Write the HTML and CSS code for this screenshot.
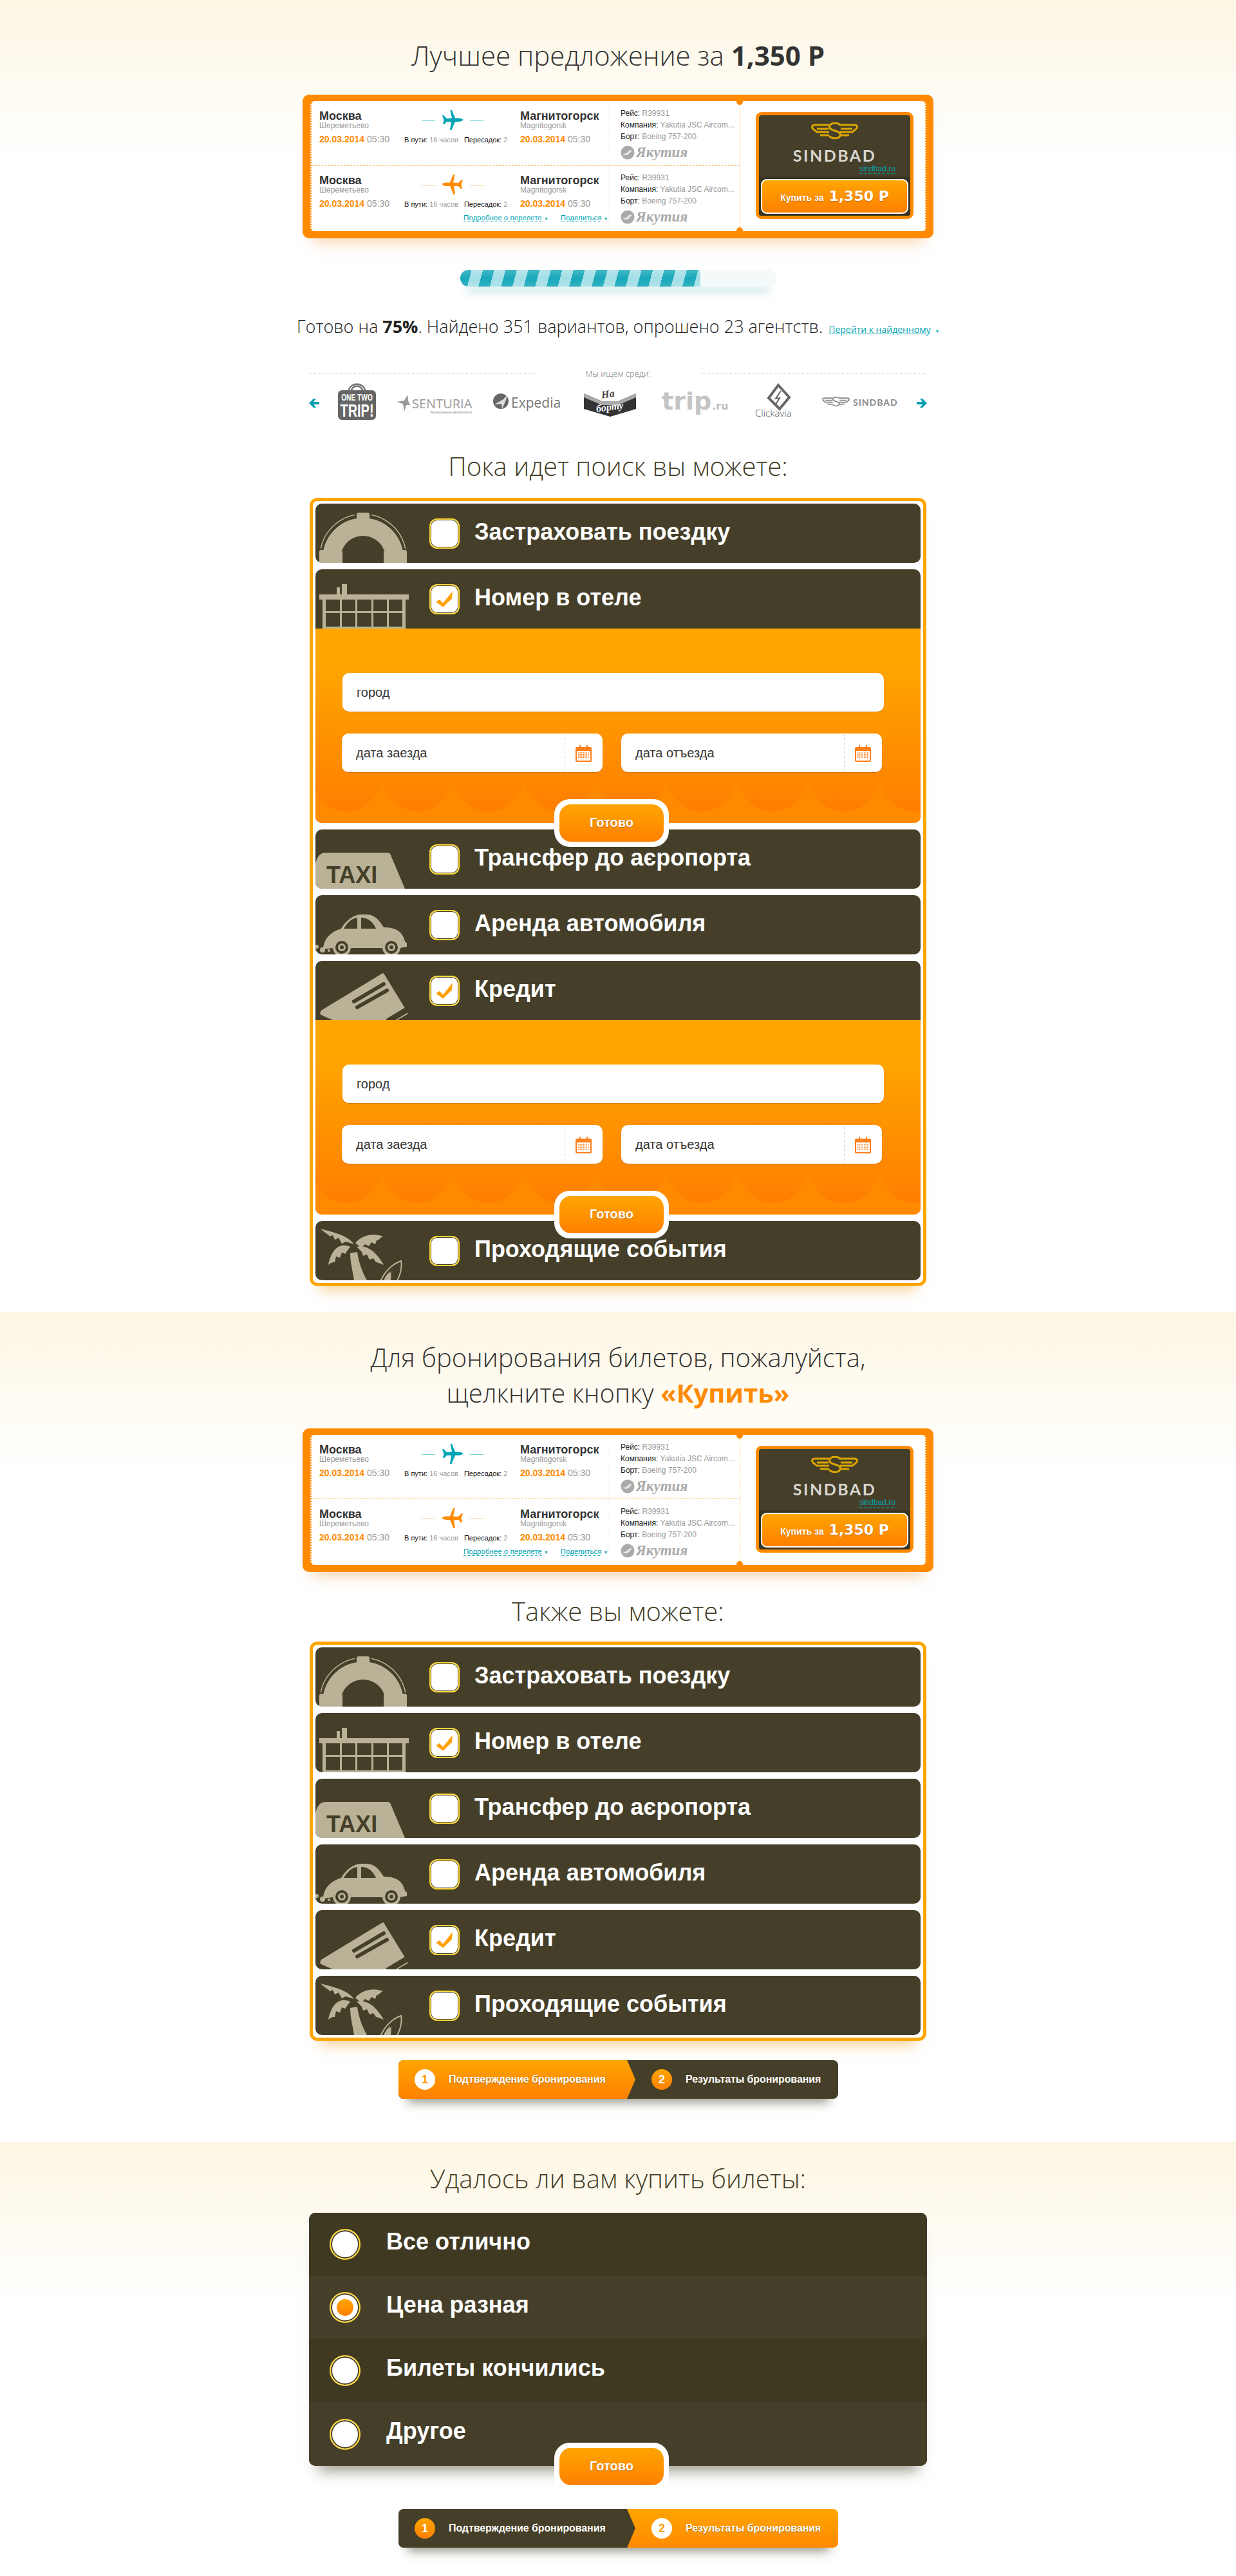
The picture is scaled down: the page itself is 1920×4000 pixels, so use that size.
FILE: index.html
```html
<!DOCTYPE html>
<html lang="ru">
<head>
    <meta charset="UTF-8">
    <title>Поиск билетов</title>
    <link rel="stylesheet" href="styles.css">
</head>
<body>
    <!-- общие иконки -->
    <svg class="sprite" xmlns="http://www.w3.org/2000/svg">
        <symbol id="plane" viewBox="0 0 32 32">
            <path d="M32 15c0-1.600-4-2.500-8-2.500h-4L15 0h-2.500L15 12.500l-8 .5-5-5H0l2.500 7.500L1 22h2l4-4h7l-2 13h2.500L20 18h4c4 0 8-1.400 8-3z"/>
        </symbol>
        <symbol id="wings" viewBox="0 0 73 28">
            <g fill="none" stroke="currentColor" stroke-width="3">
                <path d="M28 5H6C1 5 0 9 4 12l5 4h19M9 11h18M14 21h14"/>
                <path d="M45 5h22c5 0 6 4 2 7l-5 4H45M64 11H46M59 21H45"/>
                <path d="M46 6c-4-5-15-5-17 0-2 5 4 7 8 8s10 3 8 8c-2 5-13 5-17 0"/>
            </g>
        </symbol>
        <symbol id="yakutia" viewBox="0 0 22 22">
            <circle cx="11" cy="11" r="10.500" fill="#aaa"/>
            <path d="M3 13c4 0 6-1 9-4 2-2 4-2 6-1-2 1-3 3-5 5-2 2-5 3-10 0z" fill="#e8e8e8"/>
        </symbol>
        <symbol id="calendar" viewBox="0 0 25 26">
            <path d="M2 3h4V0h2v3h9V0h2v3h4a2 2 0 0 1 2 2v19a2 2 0 0 1-2 2H2a2 2 0 0 1-2-2V5a2 2 0 0 1 2-2z" fill="#ff7f1a"/>
            <rect x="2" y="9" width="21" height="15" fill="#fff"/>
            <path d="M4 12h17M4 14.500h17M4 17h17M4 19.500h17" stroke="#ff7f1a" stroke-width="1.500" stroke-dasharray="1.500 1"/>
        </symbol>
        <symbol id="check" viewBox="0 0 47 47">
            <path d="M9 28l6-4 6 6 16-20-1 12-15 15z" fill="#ffa000"/>
        </symbol>
        <symbol id="arrow" viewBox="0 0 16 14">
            <path d="M7 0L0 7l7 7h4L7 9h9V5H7l4-5z" fill="#00a0b0"/>
        </symbol>
        <symbol id="scallop" viewBox="0 0 110.400 70" preserveAspectRatio="none">
            <path d="M0 0c6 30 26 52 55.200 52S104.400 30 110.400 0V70H0z" fill="#ff8a00"/>
        </symbol>

        <symbol id="ico-insurance" viewBox="0 0 150 92">
            <g fill="#b9b296">
                <path d="M12.400 72a63 63 0 0 1 123.200 0H106.500a35 35 0 0 0-65 0z"/>
                <rect x="6" y="72" width="36" height="22" rx="3"/>
                <rect x="106" y="72" width="36" height="22" rx="3"/>
            </g>
            <path d="M8.300 70a67 67 0 0 1 131.400 0" fill="none" stroke="#b9b296" stroke-width="1.500"/>
            <rect x="61" y="10" width="26" height="12" fill="#453f29"/>
            <rect x="64" y="14" width="20" height="36" rx="3" fill="#b9b296"/>
        </symbol>
        <symbol id="ico-hotel" viewBox="0 0 150 92">
            <g fill="#b9b296">
                <rect x="33" y="28" width="5" height="12"/>
                <rect x="41" y="23" width="8" height="17"/>
                <rect x="6" y="39" width="139" height="8"/>
                <rect x="11" y="47" width="5" height="45"/>
                <rect x="135" y="47" width="5" height="45"/>
                <rect x="38" y="47" width="3" height="45"/>
                <rect x="62" y="47" width="3" height="45"/>
                <rect x="87" y="47" width="3" height="45"/>
                <rect x="111" y="47" width="3" height="45"/>
                <rect x="11" y="65" width="129" height="3"/>
                <rect x="11" y="89" width="129" height="3"/>
            </g>
        </symbol>
        <symbol id="ico-taxi" viewBox="0 0 150 92">
            <path d="M0 54C2 44 6 36 16 36H112C115 36 116 37 117 40L139 92H0z" fill="#b9b296"/>
        </symbol>
        <symbol id="ico-car" viewBox="0 0 150 92">
            <path d="M12 84C12 72 20 58 40 52 48 38 60 30 72 30H80C92 30 100 40 106 50 122 50 132 54 137 66 139 72 140 74 142 74V80L132 82A14 14 0 0 0 104 82H55A14 14 0 0 0 27 82z" fill="#b9b296"/>
            <path d="M44 52C50 42 56 36 65 35V52zM71 35C82 35 90 42 94 52H71z" fill="#453f29"/>
            <circle cx="41" cy="81" r="14" fill="#b9b296"/>
            <circle cx="41" cy="81" r="10" fill="#453f29"/>
            <circle cx="41" cy="81" r="6" fill="#b9b296"/>
            <circle cx="41" cy="81" r="3" fill="#453f29"/>
            <circle cx="118" cy="81" r="14" fill="#b9b296"/>
            <circle cx="118" cy="81" r="10" fill="#453f29"/>
            <circle cx="118" cy="81" r="6" fill="#b9b296"/>
            <circle cx="118" cy="81" r="3" fill="#453f29"/>
            <circle cx="2" cy="80" r="3" fill="#b9b296"/>
            <circle cx="11" cy="85" r="4" fill="#b9b296"/>
            <circle cx="21" cy="86" r="2" fill="#b9b296"/>
        </symbol>
        <symbol id="ico-credit" viewBox="0 0 150 92">
            <path d="M103 20c2-1 3-1 4 1l36 59c1 2 0 3-2 4l-14 8H27L9 84c-2-1-2-3-1-5 0-1 0-1 1-2z" fill="#b9b296"/>
            <path d="M60 63l46-27M65 72l46-26" stroke="#453f29" stroke-width="6" stroke-linecap="round"/>
            <path d="M142 76L112 94" stroke="#453f29" stroke-width="9"/>
        </symbol>
        <symbol id="ico-palm" viewBox="0 0 150 92">
            <g fill="#b9b296">
                <path d="M54 50l11-2c2 16 8 32 15 44H60c-2-14-6-28-6-42z"/>
                <path d="M60 36C50 22 30 18 8 12c8 8 12 8 14 12l5-2 3 7 6-3 5 9 6-3z"/>
                <path d="M62 34C72 22 90 18 105 24c-5 2-6 6-10 6l-2 6-6-3-4 6-6-3-6 6z"/>
                <path d="M54 40C42 34 26 38 20 68c5-4 7-4 10-4l2-9 6 2 3-8 5 2z"/>
                <path d="M64 40c14-4 30 6 42 28-6-2-10-4-12-4l-4-6-6 2-4-8-6 2-2-6z"/>
            </g>
            <path d="M100 96C108 76 122 66 133 62c2 12-2 24-8 34z" fill="none" stroke="#b9b296" stroke-width="2"/>
            <path d="M106 92c4-8 6-10 10-14-1 5-1 6 2-1-1 5 0 8-1 15z" fill="#b9b296"/>
        </symbol>
    </svg>

    <section class="screen">
        <h1 class="screen-title first-title">Лучшее предложение за <b>1,350 Р</b></h1>

        <div class="ticket">
            <div class="ticket-rows">
                <div class="flight">
                    <div class="city">
                        <div class="city-name">Москва</div>
                        <div class="city-port">Шереметьево</div>
                        <div class="city-date"><b>20.03.2014</b> 05:30</div>
                    </div>
                    <div class="route">
                        <div class="route-line teal"><i></i><svg class="plane"><use href="#plane"/></svg><i></i></div>
                        <div class="route-meta"><span>В пути: <em>16 часов</em></span><span>Пересадок: <em>2</em></span></div>
                    </div>
                    <div class="city">
                        <div class="city-name">Магнитогорск</div>
                        <div class="city-port">Magnitogorsk</div>
                        <div class="city-date"><b>20.03.2014</b> 05:30</div>
                    </div>
                    <div class="info">
                        <div>Рейс: <em>R39931</em></div>
                        <div>Компания: <em>Yakutia JSC Aircom...</em></div>
                        <div>Борт: <em>Boeing 757-200</em></div>
                        <div class="carrier"><svg><use href="#yakutia"/></svg><span>Якутия</span></div>
                    </div>
                </div>
                <div class="flight flight-last">
                    <div class="city">
                        <div class="city-name">Москва</div>
                        <div class="city-port">Шереметьево</div>
                        <div class="city-date"><b>20.03.2014</b> 05:30</div>
                    </div>
                    <div class="route">
                        <div class="route-line orange"><i></i><svg class="plane"><use href="#plane"/></svg><i></i></div>
                        <div class="route-meta"><span>В пути: <em>16 часов</em></span><span>Пересадок: <em>2</em></span></div>
                    </div>
                    <div class="city">
                        <div class="city-name">Магнитогорск</div>
                        <div class="city-port">Magnitogorsk</div>
                        <div class="city-date"><b>20.03.2014</b> 05:30</div>
                    </div>
                    <div class="info">
                        <div>Рейс: <em>R39931</em></div>
                        <div>Компания: <em>Yakutia JSC Aircom...</em></div>
                        <div>Борт: <em>Boeing 757-200</em></div>
                        <div class="carrier"><svg><use href="#yakutia"/></svg><span>Якутия</span></div>
                    </div>
                    <div class="flight-links"><a>Подробнее о перелете</a> <u>▼</u><a class="share">Поделиться</a> <u>▼</u></div>
                </div>
            </div>
            <div class="ticket-buy">
                <div class="agent">
                    <div class="agent-brand">
                        <svg class="agent-wings"><use href="#wings"/></svg>
                        <div class="agent-name">SINDBAD</div>
                        <a class="agent-site">sindbad.ru</a>
                    </div>
                    <div class="agent-action">
                        <div class="buy-btn">Купить за <b>1,350 Р</b></div>
                    </div>
                </div>
            </div>
        </div>

        <div class="progress"><div class="progress-fill"></div></div>

        <p class="status">Готово на <b>75%</b>. Найдено 351 вариантов, опрошено 23 агентств. <a>Перейти к найденному</a> <u>▼</u></p>

        <div class="partners-head"><span>Мы ищем среди:</span></div>
        <div class="partners">
            <svg class="partner-arrow"><use href="#arrow"/></svg>
            <svg width="59" height="57" viewBox="0 0 59 57">
                <path d="M17 12a12 10 0 0 1 25 0M21 12a8 7 0 0 1 17 0" fill="none" stroke="#777" stroke-width="2.500"/>
                <rect y="11" width="59" height="46" rx="6" fill="#666"/>
                <text class="logo-onetwo" transform="translate(29.500 27) scale(.68 1)">ONE TWO</text>
                <text class="logo-trip" transform="translate(29.500 52) scale(.74 1)">TRIP!</text>
            </svg>
            <svg width="124" height="57" viewBox="0 0 124 57">
                <path d="M20 18l-5 9-12 2 10 3 2 12 3-10 6 0-3-7z" fill="#999"/>
                <text x="27" y="39" class="logo-senturia">SENTURIA</text>
                <text x="120" y="47" class="logo-tiny">бронирование авиабилетов</text>
            </svg>
            <svg width="112" height="57" viewBox="0 0 112 57">
                <circle cx="12" cy="28" r="12" fill="#666"/>
                <path d="M2 33l14-8 6-7-2 8-6 14-1-8z" fill="#ddd"/>
                <text x="28" y="38" class="logo-expedia">Expedia</text>
            </svg>
            <svg width="92" height="57" viewBox="0 0 92 57">
                <path d="M0 16l28 12 25 0 28-12v24L41 52 0 40z" fill="#333"/>
                <path d="M0 16l28 12h25l28-12v6L53 34H28L0 22z" fill="#aaa"/>
                <text x="38" y="22" class="logo-script logo-script-top" transform="rotate(-8 38 22)">На</text>
                <text x="41" y="42" class="logo-script" transform="rotate(-8 41 42)">борту</text>
            </svg>
            <svg width="115" height="57" viewBox="0 0 115 57">
                <text x="0" y="41" class="logo-tripru">trip</text>
                <text x="78" y="41" class="logo-ru">.ru</text>
            </svg>
            <svg width="76" height="57" viewBox="0 0 76 57">
                <path d="M37 3l17 19-15 18-17-17z" fill="none" stroke="#666" stroke-width="4"/>
                <path d="M41 12l-8 12 6-1-6 10" fill="none" stroke="#666" stroke-width="2"/>
                <text x="1" y="52" class="logo-click">Clickavia</text>
            </svg>
            <svg width="118" height="57" viewBox="0 0 118 57">
                <svg class="logo-wings" x="0" y="20" width="43" height="17"><use href="#wings"/></svg>
                <text x="48" y="35" class="logo-sindbad">SINDBAD</text>
            </svg>
            <svg class="partner-arrow flip"><use href="#arrow"/></svg>
        </div>

        <h2 class="screen-title sub-title">Пока идет поиск вы можете:</h2>

        <div class="options">
            <div class="option">
                <svg class="option-ico"><use href="#ico-insurance"/></svg>
                <span class="check"></span>
                <span class="option-label">Застраховать поездку</span>
            </div>
            <div class="option open">
                <svg class="option-ico"><use href="#ico-hotel"/></svg>
                <span class="check"><svg><use href="#check"/></svg></span>
                <span class="option-label">Номер в отеле</span>
            </div>
            <div class="option-form">
                <div class="field field-wide">город</div>
                <div class="field-row">
                    <div class="field">дата заезда<span class="field-cal"><svg><use href="#calendar"/></svg></span></div>
                    <div class="field">дата отъезда<span class="field-cal"><svg><use href="#calendar"/></svg></span></div>
                </div>
                <svg class="scallops"><defs><pattern id="scallops-a" width="110.400" height="70" patternUnits="userSpaceOnUse" x="-7"><use href="#scallop" width="110.400" height="70"/></pattern></defs><rect width="940" height="70" fill="url(#scallops-a)"/></svg>
                <div class="done-btn"><span>Готово</span></div>
            </div>
            <div class="option">
                <svg class="option-ico"><use href="#ico-taxi"/><text x="17" y="83" class="ico-taxi-text">TAXI</text></svg>
                <span class="check"></span>
                <span class="option-label">Трансфер до аєропорта</span>
            </div>
            <div class="option">
                <svg class="option-ico"><use href="#ico-car"/></svg>
                <span class="check"></span>
                <span class="option-label">Аренда автомобиля</span>
            </div>
            <div class="option open">
                <svg class="option-ico"><use href="#ico-credit"/></svg>
                <span class="check"><svg><use href="#check"/></svg></span>
                <span class="option-label">Кредит</span>
            </div>
            <div class="option-form">
                <div class="field field-wide">город</div>
                <div class="field-row">
                    <div class="field">дата заезда<span class="field-cal"><svg><use href="#calendar"/></svg></span></div>
                    <div class="field">дата отъезда<span class="field-cal"><svg><use href="#calendar"/></svg></span></div>
                </div>
                <svg class="scallops"><rect width="940" height="70" fill="url(#scallops-a)"/></svg>
                <div class="done-btn"><span>Готово</span></div>
            </div>
            <div class="option">
                <svg class="option-ico"><use href="#ico-palm"/></svg>
                <span class="check"></span>
                <span class="option-label">Проходящие события</span>
            </div>
        </div>
    </section>

    <section class="screen">
        <h2 class="screen-title book-title">Для бронирования билетов, пожалуйста,<br>щелкните кнопку <b class="accent">«Купить»</b></h2>

        <div class="ticket ticket-second">
            <div class="ticket-rows">
                <div class="flight">
                    <div class="city">
                        <div class="city-name">Москва</div>
                        <div class="city-port">Шереметьево</div>
                        <div class="city-date"><b>20.03.2014</b> 05:30</div>
                    </div>
                    <div class="route">
                        <div class="route-line teal"><i></i><svg class="plane"><use href="#plane"/></svg><i></i></div>
                        <div class="route-meta"><span>В пути: <em>16 часов</em></span><span>Пересадок: <em>2</em></span></div>
                    </div>
                    <div class="city">
                        <div class="city-name">Магнитогорск</div>
                        <div class="city-port">Magnitogorsk</div>
                        <div class="city-date"><b>20.03.2014</b> 05:30</div>
                    </div>
                    <div class="info">
                        <div>Рейс: <em>R39931</em></div>
                        <div>Компания: <em>Yakutia JSC Aircom...</em></div>
                        <div>Борт: <em>Boeing 757-200</em></div>
                        <div class="carrier"><svg><use href="#yakutia"/></svg><span>Якутия</span></div>
                    </div>
                </div>
                <div class="flight flight-last">
                    <div class="city">
                        <div class="city-name">Москва</div>
                        <div class="city-port">Шереметьево</div>
                        <div class="city-date"><b>20.03.2014</b> 05:30</div>
                    </div>
                    <div class="route">
                        <div class="route-line orange"><i></i><svg class="plane"><use href="#plane"/></svg><i></i></div>
                        <div class="route-meta"><span>В пути: <em>16 часов</em></span><span>Пересадок: <em>2</em></span></div>
                    </div>
                    <div class="city">
                        <div class="city-name">Магнитогорск</div>
                        <div class="city-port">Magnitogorsk</div>
                        <div class="city-date"><b>20.03.2014</b> 05:30</div>
                    </div>
                    <div class="info">
                        <div>Рейс: <em>R39931</em></div>
                        <div>Компания: <em>Yakutia JSC Aircom...</em></div>
                        <div>Борт: <em>Boeing 757-200</em></div>
                        <div class="carrier"><svg><use href="#yakutia"/></svg><span>Якутия</span></div>
                    </div>
                    <div class="flight-links"><a>Подробнее о перелете</a> <u>▼</u><a class="share">Поделиться</a> <u>▼</u></div>
                </div>
            </div>
            <div class="ticket-buy">
                <div class="agent">
                    <div class="agent-brand">
                        <svg class="agent-wings"><use href="#wings"/></svg>
                        <div class="agent-name">SINDBAD</div>
                        <a class="agent-site">sindbad.ru</a>
                    </div>
                    <div class="agent-action">
                        <div class="buy-btn">Купить за <b>1,350 Р</b></div>
                    </div>
                </div>
            </div>
        </div>

        <h2 class="screen-title also-title">Также вы можете:</h2>

        <div class="options options-second">
            <div class="option">
                <svg class="option-ico"><use href="#ico-insurance"/></svg>
                <span class="check"></span>
                <span class="option-label">Застраховать поездку</span>
            </div>
            <div class="option">
                <svg class="option-ico"><use href="#ico-hotel"/></svg>
                <span class="check"><svg><use href="#check"/></svg></span>
                <span class="option-label">Номер в отеле</span>
            </div>
            <div class="option">
                <svg class="option-ico"><use href="#ico-taxi"/><text x="17" y="83" class="ico-taxi-text">TAXI</text></svg>
                <span class="check"></span>
                <span class="option-label">Трансфер до аєропорта</span>
            </div>
            <div class="option">
                <svg class="option-ico"><use href="#ico-car"/></svg>
                <span class="check"></span>
                <span class="option-label">Аренда автомобиля</span>
            </div>
            <div class="option">
                <svg class="option-ico"><use href="#ico-credit"/></svg>
                <span class="check"><svg><use href="#check"/></svg></span>
                <span class="option-label">Кредит</span>
            </div>
            <div class="option">
                <svg class="option-ico"><use href="#ico-palm"/></svg>
                <span class="check"></span>
                <span class="option-label">Проходящие события</span>
            </div>
        </div>

        <div class="steps steps-first">
            <div class="step step-one"><span class="step-num">1</span>Подтверждение бронирования</div>
            <div class="step step-two"><span class="step-num">2</span>Результаты бронирования</div>
        </div>
    </section>

    <section class="screen screen-last">
        <h2 class="screen-title result-title">Удалось ли вам купить билеты:</h2>

        <div class="answers">
            <div class="answer"><span class="radio"></span><span class="answer-label">Все отлично</span></div>
            <div class="answer"><span class="radio selected"></span><span class="answer-label">Цена разная</span></div>
            <div class="answer"><span class="radio"></span><span class="answer-label">Билеты кончились</span></div>
            <div class="answer"><span class="radio"></span><span class="answer-label">Другое</span></div>
            <div class="done-btn done-btn-flat"><span>Готово</span></div>
        </div>

        <div class="steps steps-second">
            <div class="step step-one"><span class="step-num">1</span>Подтверждение бронирования</div>
            <div class="step step-two"><span class="step-num">2</span>Результаты бронирования</div>
        </div>
    </section>
</body>
</html>
```

FILE: styles.css
```css
* {
    box-sizing: border-box;
}
body {
    margin: 0;
    background: #fff;
    color: #333;
    font-family: "Liberation Sans", Arial, sans-serif;
}
.sprite {
    position: absolute;
    width: 0;
    height: 0;
}
em {
    font-style: normal;
    color: #999;
}

/* секции */
.screen {
    display: flow-root;
    height: 1289px;
    background: linear-gradient(#fdf6e3, #fff 250px);
}
.screen:first-of-type {
    height: 2037px;
}
.screen-last {
    height: 674px;
}
.screen-title {
    margin: 0;
    font-family: "Open Sans", sans-serif;
    font-size: 40px;
    font-weight: 300;
    line-height: 55px;
    text-align: center;
    color: #333;
}
.screen-title b {
    font-weight: 700;
}
.first-title {
    margin-top: 58px;
    font-size: 42px;
}
.sub-title {
    margin-top: 44px;
    color: #453f29;
}
.book-title {
    margin-top: 43px;
}
.accent {
    color: #ff8a00;
}
.also-title {
    margin-top: 33px;
    color: #453f29;
}
.result-title {
    margin-top: 29px;
    color: #453f29;
}

/* билет */
.ticket {
    display: flex;
    width: 980px;
    height: 223px;
    margin: 34px 0 0 470px;
    padding: 10px 11px 11px 12px;
    background: #ff8a00;
    border-radius: 10px;
    box-shadow: 0 22px 20px -16px rgba(240, 170, 90, 0.5);
}
.ticket-second {
    margin-top: 28px;
}
.ticket-rows {
    width: 667px;
    background: #fff;
    border-radius: 6px 0 0 6px;
    border-left: 2px dotted #ff8a00;
}
.ticket-buy {
    position: relative;
    flex: 1;
    padding: 17px 0 0 24px;
    background: #fff;
    border-left: 1px dashed #ffb866;
    border-right: 2px dotted #ff8a00;
    border-radius: 0 6px 6px 0;
}
.ticket-buy::before,
.ticket-buy::after {
    content: "";
    position: absolute;
    left: -6px;
    width: 10px;
    height: 10px;
    border-radius: 50%;
    background: #ff8a00;
}
.ticket-buy::before {
    top: -4px;
}
.ticket-buy::after {
    bottom: -4px;
}
.flight {
    display: grid;
    grid-template-columns: 132px 180px 136px 1fr;
    grid-template-rows: 1fr;
    height: 100px;
    padding-left: 12px;
    border-bottom: 1px dashed #ff9d2e;
}
.flight-last {
    height: 102px;
    border-bottom: 0;
}
.city {
    padding-top: 13px;
}
.city-name {
    font-size: 18px;
    font-weight: 700;
    line-height: 20px;
}
.city-port {
    font-size: 12px;
    line-height: 10px;
    color: #999;
}
.city-date {
    margin-top: 7px;
    font-size: 14px;
    line-height: 18px;
    color: #999;
}
.city-date b {
    color: #ff8a00;
}
.route {
    padding-top: 14px;
}
.route-line {
    display: flex;
    align-items: center;
    justify-content: center;
    height: 32px;
    margin-right: 30px;
}
.route-line i {
    width: 21px;
    height: 1px;
    margin: 0 11px;
    opacity: 0.5;
    background: currentColor;
}
.teal {
    color: #00a4b4;
}
.orange {
    color: #ff8a00;
}
.plane {
    width: 32px;
    height: 32px;
    fill: currentColor;
}
.orange .plane {
    transform: scaleX(-1);
}
.route-meta {
    display: flex;
    gap: 9px;
    margin-top: 6px;
    font-size: 11px;
    line-height: 16px;
    color: #111;
}
.info {
    grid-column: 4;
    grid-row: 1 / 3;
    padding: 10px 0 0 19px;
    border-left: 1px dashed #ddd;
    font-size: 12px;
    line-height: 18px;
    white-space: nowrap;
    color: #222;
}
.carrier {
    display: flex;
    align-items: center;
    gap: 2px;
    height: 25px;
    margin-top: 3px;
}
.carrier svg {
    width: 22px;
    height: 22px;
}
.carrier span {
    font-family: "Liberation Serif", serif;
    font-size: 23px;
    font-style: italic;
    font-weight: 700;
    color: #aaa;
}
.flight-last {
    grid-template-rows: 74px 1fr;
}
.flight-last .city,
.flight-last .route {
    grid-row: 1;
}
.flight-links {
    grid-column: 1 / 4;
    grid-row: 2;
    padding-left: 224px;
    font-size: 11.500px;
    line-height: 14px;
    white-space: nowrap;
    color: #00a4b4;
}
.flight-links a {
    border-bottom: 1px dotted #00a4b4;
}
.flight-links u,
.status u {
    font-size: 7px;
    line-height: 1;
    text-decoration: none;
    color: #00a4b4;
}
.share {
    margin-left: 19px;
}

/* карточка агентства */
.agent {
    width: 245px;
    height: 166px;
    border: 5px solid #ff8a00;
    border-radius: 9px;
    background: #453f29;
    overflow: hidden;
}
.agent-brand {
    position: relative;
    height: 95px;
    padding-top: 10px;
    text-align: center;
}
.agent-wings {
    display: block;
    width: 73px;
    height: 28px;
    margin: 0 auto;
    color: #dba600;
}
.agent-name {
    margin-top: 9px;
    font-family: Lato, sans-serif;
    font-size: 25px;
    font-weight: 700;
    line-height: 30px;
    letter-spacing: 2.500px;
    color: #d9d7d0;
}
.agent-site {
    position: absolute;
    right: 23px;
    bottom: 4px;
    font-size: 12px;
    line-height: 14px;
    border-bottom: 1px dotted #00a4b4;
    color: #00a4b4;
}
.agent-action {
    height: 61px;
    padding: 4px 3px 0;
    background: #3a3523;
}
.buy-btn {
    height: 54px;
    border: 2px solid #fff;
    border-radius: 9px;
    background: linear-gradient(#ffa500, #ff8000);
    font-size: 14px;
    font-weight: 700;
    line-height: 50px;
    text-align: center;
    color: #fff;
    text-shadow: 0 1px 1px rgba(150, 70, 0, 0.6);
}
.buy-btn b {
    margin-left: 4px;
    font-family: "DejaVu Sans", sans-serif;
    font-size: 22px;
}

/* прогресс */
.progress {
    width: 491px;
    height: 26px;
    margin: 49px 0 0 715px;
    border-radius: 13px;
    background: #f4f9f9;
    box-shadow: 0 18px 14px -10px rgba(110, 185, 195, 0.55);
    overflow: hidden;
}
.progress-fill {
    width: 373px;
    height: 26px;
    background:
        linear-gradient(rgba(255, 255, 255, 0.2), rgba(255, 255, 255, 0) 50%, rgba(255, 255, 255, 0.12)),
        repeating-linear-gradient(105deg, #17a8ba 0, #17a8ba 17px, #a3dfe6 17px, #a3dfe6 34px);
}
.status {
    margin: 44px 0 0 461px;
    font-family: "Open Sans", sans-serif;
    font-size: 27px;
    font-weight: 300;
    line-height: 36px;
    white-space: nowrap;
    color: #222;
}
.status b {
    font-weight: 700;
}
.status a {
    margin-left: 2px;
    font-size: 14px;
    font-weight: 400;
    line-height: 1;
    text-decoration: underline;
    color: #00a4b4;
}

/* партнеры */
.partners-head {
    display: flex;
    align-items: center;
    width: 958px;
    height: 16px;
    margin: 47px 0 0 481px;
    font-family: "Open Sans", sans-serif;
    font-size: 13px;
    font-weight: 300;
    color: #777;
}
.partners-head::before,
.partners-head::after {
    content: "";
    flex: 1;
    border-top: 1px dotted #bbb;
}
.partners-head span {
    width: 255px;
    text-align: center;
}
.partners {
    display: flex;
    align-items: center;
    gap: 29px;
    height: 57px;
    margin: 7px 0 0 480px;
}
.partner-arrow {
    width: 16px;
    height: 14px;
    margin-top: 4px;
}
.flip {
    transform: scaleX(-1);
}
.logo-onetwo {
    font: 700 15px "Liberation Sans", sans-serif;
    fill: #fff;
    text-anchor: middle;
}
.logo-trip {
    font: 700 27px "Liberation Sans", sans-serif;
    fill: #fff;
    text-anchor: middle;
}
.logo-senturia {
    font: 400 20px "Open Sans", sans-serif;
    fill: #999;
}
.logo-tiny {
    font: 400 5px "Liberation Sans", sans-serif;
    fill: #888;
    text-anchor: end;
}
.logo-expedia {
    font: 400 21px "Open Sans", sans-serif;
    fill: #777;
}
.logo-script {
    font: italic 700 16px "Liberation Serif", serif;
    fill: #fff;
    text-anchor: middle;
}
.logo-script-top {
    fill: #444;
}
.logo-tripru {
    font: 700 38px "DejaVu Sans", sans-serif;
    fill: #c4c4c4;
}
.logo-ru {
    font: 700 16px "DejaVu Sans", sans-serif;
    fill: #bbb;
}
.logo-click {
    font: 300 15px "Open Sans", sans-serif;
    fill: #555;
}
.logo-wings {
    color: #888;
}
.logo-sindbad {
    font: 700 14px Lato, sans-serif;
    letter-spacing: 1px;
    fill: #888;
}

/* блок опций */
.options {
    width: 958px;
    margin: 22px 0 0 481px;
    padding: 4px;
    border: 5px solid #ffa500;
    border-radius: 12px;
    background: #fff;
    box-shadow: 0 22px 20px -16px rgba(240, 170, 60, 0.55);
}
.options-second {
    margin-top: 20px;
}
.option {
    display: flex;
    align-items: center;
    height: 92px;
    margin-bottom: 10px;
    border-radius: 10px;
    background: #453f29;
    overflow: hidden;
}
.option:last-child {
    margin-bottom: 0;
}
.option.open {
    margin-bottom: 0;
    border-radius: 10px 10px 0 0;
}
.option-ico {
    flex: none;
    width: 150px;
    height: 92px;
    margin-right: 27px;
}
.ico-taxi-text {
    font: 700 36px "Liberation Sans", sans-serif;
    fill: #453f29;
}
.check {
    flex: none;
    width: 47px;
    height: 47px;
    border: 2px solid #ffd83d;
    border-radius: 12px;
    background: #fff;
    box-shadow: inset 0 0 0 1px #453f29;
}
.check svg {
    display: block;
    width: 43px;
    height: 43px;
}
.option-label {
    margin: 0 0 4px 23px;
    font-size: 36px;
    font-weight: 700;
    color: #fff;
}
.option-form {
    position: relative;
    height: 302px;
    margin-bottom: 10px;
    padding: 69px 0 0 42px;
    border-radius: 0 0 10px 10px;
    background: linear-gradient(#ffa500 20%, #ff7e00 94%);
}
.field {
    position: relative;
    width: 405px;
    height: 60px;
    padding-left: 22px;
    border-radius: 10px;
    background: #fff;
    box-shadow: 0 1px 1px rgba(190, 90, 0, 0.6);
    font-size: 20px;
    line-height: 60px;
    color: #333;
}
.field-wide {
    width: 841px;
}
.field-row {
    position: relative;
    z-index: 1;
    display: flex;
    gap: 29px;
    margin: 34px 0 0 -1px;
}
.field-cal {
    position: absolute;
    top: 2px;
    right: 0;
    bottom: 2px;
    width: 59px;
    border-left: 1px dotted #ccc;
    padding: 16px 0 0 16px;
}
.field-cal svg {
    display: block;
    width: 25px;
    height: 26px;
}
.scallops {
    position: absolute;
    left: 0;
    bottom: 0;
    width: 940px;
    height: 70px;
    border-radius: 0 0 10px 10px;
}
.done-btn {
    position: absolute;
    left: 371px;
    bottom: -37px;
    z-index: 2;
    width: 178px;
    height: 74px;
    padding: 8px;
    background: #fff;
    border-radius: 24px;
}
.done-btn span {
    display: block;
    height: 58px;
    border-radius: 18px;
    background: linear-gradient(#ffa500, #ff8000);
    font-size: 20px;
    font-weight: 700;
    line-height: 56px;
    text-align: center;
    color: #fff;
    text-shadow: 0 1px 1px rgba(150, 70, 0, 0.6);
}
.done-btn-flat {
    bottom: -30px;
    height: 66px;
    left: 381px;
    padding-bottom: 0;
    border-radius: 24px 24px 0 0;
}

/* шаги */
.steps {
    position: relative;
    display: flex;
    width: 683px;
    height: 60px;
    margin-left: 619px;
    border-radius: 8px;
    box-shadow: 0 20px 16px -14px rgba(60, 55, 30, 0.5);
    font-size: 16px;
    font-weight: 700;
    line-height: 60px;
    letter-spacing: -0.100px;
    color: #fff;
    text-shadow: 0 1px 1px rgba(60, 40, 0, 0.5);
}
.steps-first {
    margin-top: 30px;
    background: #453f29;
}
.steps-second {
    margin-top: 67px;
    background: linear-gradient(#ffa500, #ff8a00);
}
.step {
    display: flex;
    align-items: center;
    white-space: nowrap;
}
.step-one {
    width: 368px;
    padding-left: 25px;
    border-radius: 8px 0 0 8px;
    clip-path: polygon(0 0, 355px 0, 368px 30px, 355px 60px, 0 60px);
}
.steps-first .step-one {
    background: linear-gradient(#ffa500, #ff8000);
}
.steps-second .step-one {
    background: #453f29;
}
.step-two {
    padding-left: 25px;
}
.step-num {
    flex: none;
    width: 32px;
    height: 32px;
    margin-right: 21px;
    border-radius: 50%;
    font-size: 18px;
    line-height: 32px;
    text-align: center;
    text-shadow: none;
    background: linear-gradient(#ffa500, #ff8000);
}
.steps-first .step-one .step-num,
.steps-second .step-two .step-num {
    background: #fff;
    color: #ff9c00;
}

/* опрос */
.answers {
    position: relative;
    width: 960px;
    margin: 26px 0 0 480px;
    border-radius: 10px;
    background: #453f29;
    box-shadow: 0 22px 20px -14px rgba(60, 55, 30, 0.5);
}
.answer {
    display: flex;
    align-items: center;
    height: 98px;
    padding-left: 32px;
    background: #453f29;
}
.answer:nth-child(odd) {
    background: #3f3922;
}
.answer:first-child {
    border-radius: 10px 10px 0 0;
}
.answer:nth-child(4) {
    height: 99px;
    border-radius: 0 0 10px 10px;
}
.radio {
    position: relative;
    flex: none;
    width: 48px;
    height: 48px;
    border: 2px solid #ffd83d;
    border-radius: 50%;
    background: #fff;
    box-shadow: inset 0 0 0 2px #453f29;
}
.radio.selected::after {
    content: "";
    position: absolute;
    left: 9px;
    top: 9px;
    width: 26px;
    height: 26px;
    border-radius: 50%;
    background: linear-gradient(#ffa500, #ff8000);
}
.answer-label {
    margin: 0 0 9px 40px;
    font-size: 36px;
    font-weight: 700;
    color: #fff;
}
```
